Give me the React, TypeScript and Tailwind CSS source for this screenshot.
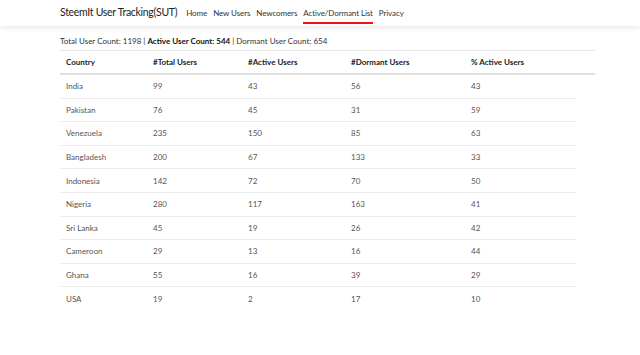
import React from 'react'

const rows = [
  ['India', 99, 43, 56, 43],
  ['Pakistan', 76, 45, 31, 59],
  ['Venezuela', 235, 150, 85, 63],
  ['Bangladesh', 200, 67, 133, 33],
  ['Indonesia', 142, 72, 70, 50],
  ['Nigeria', 280, 117, 163, 41],
  ['Sri Lanka', 45, 19, 26, 42],
  ['Cameroon', 29, 13, 16, 44],
  ['Ghana', 55, 16, 39, 29],
  ['USA', 19, 2, 17, 10],
]

const cols = 'grid grid-cols-[87px_95px_103px_120px_1fr]'

export default function App() {
  return (
    <div className="min-h-[355px] bg-white text-[#333]" style={{ fontFamily: 'Lato, "Noto Sans", sans-serif' }}>
      <nav className="h-[26px] bg-white shadow-[0_2px_5px_rgba(0,0,0,0.09)] flex items-center pl-[60px]">
        <span className="text-[10.5px] tracking-[-0.3px] text-[#222] mr-[9px]">SteemIt User Tracking(SUT)</span>
        <ul className="flex items-center gap-[6px] text-[8px] tracking-[-0.1px] text-[#333] h-full">
          <li>Home</li>
          <li>New Users</li>
          <li>Newcomers</li>
          <li className="relative">
            Active/Dormant List
            <span className="absolute left-0 right-0 -bottom-[5px] h-[2px] bg-[#e8141e]" />
          </li>
          <li>Privacy</li>
        </ul>
      </nav>

      <div className="pl-[60px] pt-[9px]">
        <p className="text-[8px] leading-[12px] text-[#333]">
          Total User Count: 1198 | <b className="font-bold text-[#111]">Active User Count: 544</b> | Dormant User Count: 654
        </p>

        <div className="mt-[3px] w-[535px] border-t border-[#e5e5e5]">
          <div className={`${cols} h-[24px] items-center border-b-2 border-[#e0e0e0] text-[8px] font-bold text-[#222]`}>
            <div className="pl-[6px]">Country</div>
            <div className="pl-[6px]">#Total Users</div>
            <div className="pl-[6px]">#Active Users</div>
            <div className="pl-[6px]">#Dormant Users</div>
            <div className="pl-[6px]">% Active Users</div>
          </div>
        </div>

        <div className="w-[516px]">
          {rows.map((r, i) => (
            <div
              key={r[0]}
              className={`${cols} h-[23.6px] items-center text-[8px] text-[#555] ${i < rows.length - 1 ? 'border-b border-[#ebebeb]' : ''}`}
            >
              {r.map((c, j) => (
                <div key={j} className="pl-[6px]">{c}</div>
              ))}
            </div>
          ))}
        </div>
      </div>
    </div>
  )
}
